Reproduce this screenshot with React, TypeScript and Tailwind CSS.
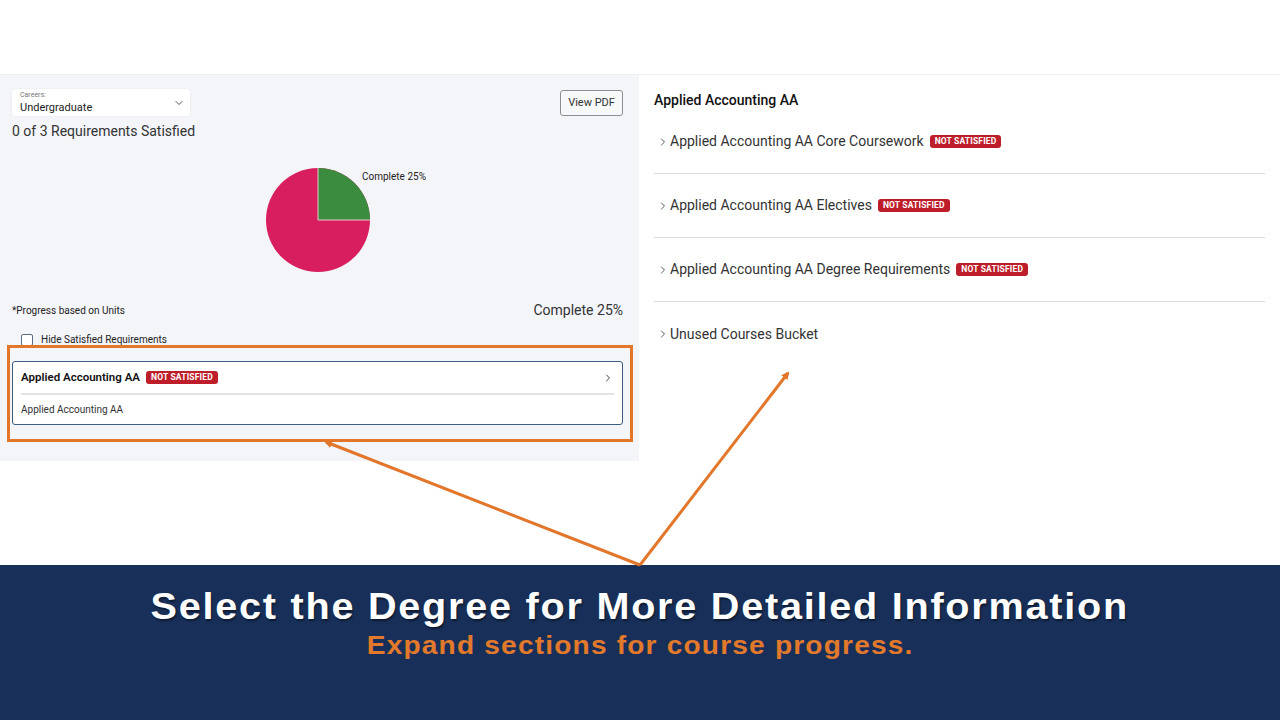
import { ChevronDown, ChevronRight } from "lucide-react";

const font = { fontFamily: "Roboto, 'Noto Sans', sans-serif" };

function Badge() {
	return (
		<span className="ml-[6px] inline-flex h-[13px] items-center rounded-[3px] bg-[#bd1e2a] px-[5px] text-[8.5px] font-bold leading-none tracking-[0.02em] text-white">
			NOT SATISFIED
		</span>
	);
}

function PieChart() {
	// 25% complete, slice starts at 12 o'clock
	return (
		<svg width="240" height="120" viewBox="0 0 240 120">
			<circle cx="120" cy="60" r="52" fill="#d81e5f" />
			<path d="M120 60 L120 8 A52 52 0 0 1 172 60 Z" fill="#3b8c3e" />
			<path d="M120 8 L120 60 L172 60" fill="none" stroke="#e6c9c9" strokeWidth="1" />
			<text x="164" y="20" fontSize="10" fill="#222" fontFamily="Roboto, sans-serif">
				Complete 25%
			</text>
		</svg>
	);
}

const rows = [
	{ label: "Applied Accounting AA Core Coursework", badge: true },
	{ label: "Applied Accounting AA Electives", badge: true },
	{ label: "Applied Accounting AA Degree Requirements", badge: true },
	{ label: "Unused Courses Bucket", badge: false },
];

export default function App() {
	return (
		<div className="relative flex h-[720px] w-[1280px] flex-col overflow-hidden bg-white" style={font}>
			<div className="h-[75px] border-b border-[#eef0f3] bg-white" />

			<div className="flex h-[490px]">
				{/* Left panel */}
				<div className="w-[639px]">
					<div className="flex h-[386px] flex-col bg-[#f4f5f9] pl-3 pr-[16px] pt-[14px]">
						<div className="flex items-start justify-between">
							<div className="flex h-[27px] w-[178px] items-center justify-between rounded-[3px] bg-white pl-[8px] pr-[5px] shadow-[0_0_2px_rgba(0,0,0,0.08)]">
								<div className="flex flex-col leading-none">
									<span className="text-[7px] text-[#777]">Careers:</span>
									<span className="mt-[3px] text-[11px] text-[#222]">Undergraduate</span>
								</div>
								<ChevronDown className="h-[12px] w-[12px] text-[#555]" strokeWidth={2} />
							</div>
							<button
								type="button"
								className="mt-[1px] h-[26px] w-[63px] rounded-[3px] border border-[#8a8f96] bg-[#f7f8fa] text-[11px] text-[#333]"
							>
								View PDF
							</button>
						</div>
						<div className="mt-[5px] text-[14px] leading-[20px] text-[#333]">0 of 3 Requirements Satisfied</div>

						<div className="mt-[19px] flex justify-center">
							<PieChart />
						</div>

						<div className="mt-[21px] flex items-end justify-between">
							<span className="mb-[1px] text-[10px] leading-[14px] text-[#222]">*Progress based on Units</span>
							<span className="text-[14px] leading-[18px] text-[#333]">Complete 25%</span>
						</div>

						<label className="mt-[13px] flex items-center gap-[8px] pl-[9px]">
							<span className="h-[12px] w-[12px] rounded-[2px] border border-[#5a6b85] bg-white" />
							<span className="text-[10px] text-[#222]">Hide Satisfied Requirements</span>
						</label>

						<div className="mt-[14px] rounded-[3px] border border-[#3e5d82] bg-white px-[8px]">
							<div className="flex h-[31px] items-center justify-between">
								<div className="flex items-center">
									<span className="text-[11.5px] font-semibold text-[#111]">Applied Accounting AA</span>
									<Badge />
								</div>
								<ChevronRight className="h-[12px] w-[12px] text-[#444]" strokeWidth={2} />
							</div>
							<div className="h-[2px] bg-[#e2e4e8]" />
							<div className="flex h-[29px] items-center text-[10px] text-[#333]">Applied Accounting AA</div>
						</div>
					</div>
				</div>

				{/* Right panel */}
				<div className="flex flex-1 flex-col pl-[15px] pr-[15px] pt-[15px]">
					<div className="text-[14px] font-medium leading-[20px] text-[#111]">Applied Accounting AA</div>
					{rows.map((r, i) => (
						<div
							key={r.label}
							className={`flex h-[64px] items-center pl-[3px] ${i < rows.length - 1 ? "border-b-[1.5px] border-[#d8dbe2]" : ""}`}
						>
							<ChevronRight className="mr-[1px] h-[12px] w-[12px] text-[#555]" strokeWidth={2} />
							<span className="text-[14px] text-[#333]">{r.label}</span>
							{r.badge && <Badge />}
						</div>
					))}
				</div>
			</div>

			{/* Banner */}
			<div className="flex flex-1 flex-col items-center bg-[#183059] pt-[22px]" style={{ fontFamily: "'Liberation Sans', Arial, sans-serif" }}>
				<div className="scale-x-[1.1] text-[36px] font-bold leading-[40px] tracking-[1.6px] text-white [text-shadow:1px_2px_2px_rgba(0,0,0,0.45)]">
					Select the Degree for More Detailed Information
				</div>
				<div className="mt-[3px] scale-x-[1.08] text-[26px] font-bold leading-[30px] tracking-[1.1px] text-[#e2792b]">
					Expand sections for course progress.
				</div>
			</div>

			{/* Annotation overlay */}
			<div className="pointer-events-none absolute left-[7px] top-[345px] h-[97px] w-[626px] border-[3px] border-[#e2762a]" />
			<svg className="pointer-events-none absolute left-0 top-0" width="1280" height="720">
				<defs>
					<marker id="ah" markerWidth="8" markerHeight="8" refX="6" refY="4" orient="auto" markerUnits="userSpaceOnUse">
						<path d="M0 0 L8 4 L0 8 Z" fill="#e2762a" />
					</marker>
				</defs>
				<line x1="640" y1="565" x2="326" y2="442" stroke="#e2762a" strokeWidth="3" markerEnd="url(#ah)" />
				<line x1="640" y1="565" x2="788" y2="373" stroke="#e2762a" strokeWidth="3" markerEnd="url(#ah)" />
			</svg>
		</div>
	);
}
